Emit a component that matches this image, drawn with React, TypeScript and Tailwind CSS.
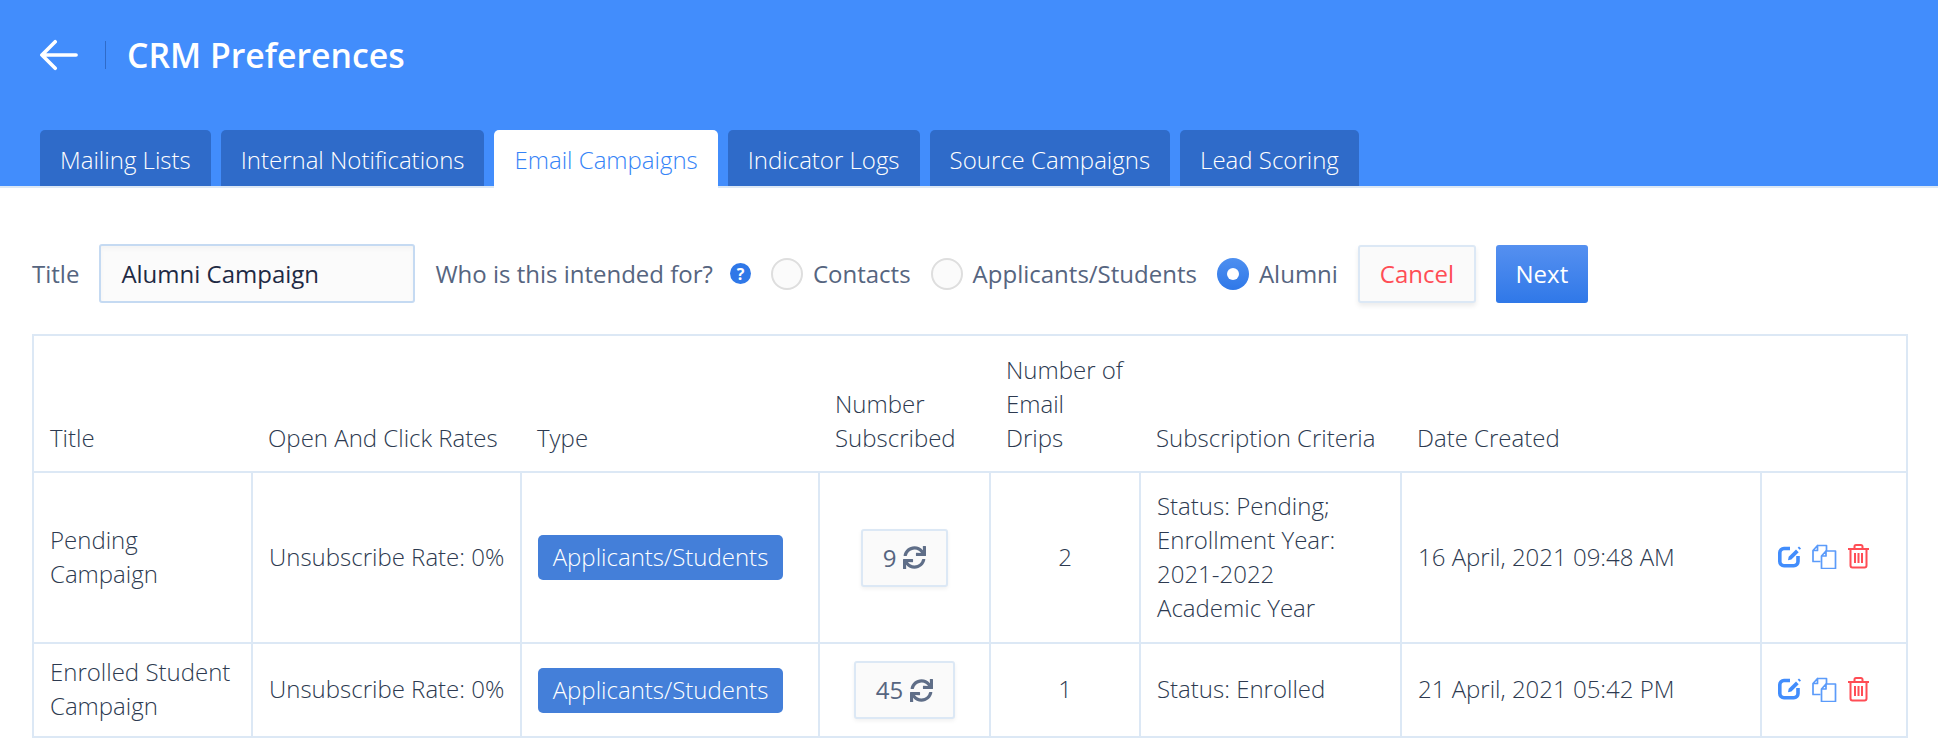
import { FaSync } from "react-icons/fa";

const tabs = ["Mailing Lists", "Internal Notifications", "Email Campaigns", "Indicator Logs", "Source Campaigns", "Lead Scoring"];

function EditIcon() {
    return (
        <svg width="24" height="24" viewBox="0 0 24 24" fill="none">
            <path d="M12 3.500H6A4.200 4.200 0 0 0 1.800 7.700v8.900A4.200 4.200 0 0 0 6 20.800h9.800a4.200 4.200 0 0 0 4.200-4.200V11" stroke="#428dfc" strokeWidth="3.600" />
            <path d="M10 15.200l.7-3.400L18 4.500l2.700 2.700-7.300 7.300z" fill="#428dfc" />
            <path d="M21 1.500l2 2-1.300 1.300-2-2z" fill="#428dfc" />
        </svg>
    );
}

function CopyIcon() {
    return (
        <svg width="25" height="25" viewBox="0 0 25 25" fill="none" stroke="#5b9bfa" strokeWidth="1.700" strokeLinejoin="round">
            <path d="M5.500 1.500h9v6M8.500 17.500H1V6.500l4.500-5v5H1" />
            <path d="M14 7h9.500v17.500h-14V12L14 7v5H9.500" fill="#fff" />
        </svg>
    );
}

function TrashIcon() {
    return (
        <svg width="23" height="25" viewBox="0 0 23 25" fill="none" stroke="#ff4d55" strokeWidth="2">
            <path d="M1 5h21" />
            <path d="M7.500 5V2.500a1.500 1.500 0 0 1 1.500-1.500h5a1.500 1.500 0 0 1 1.500 1.500V5" />
            <path d="M3.500 5v16.500a2 2 0 0 0 2 2h12a2 2 0 0 0 2-2V5" />
            <path d="M8 9v10M11.500 9v10M15 9v10" />
        </svg>
    );
}

function Radio({ checked, label }: { checked?: boolean; label: string }) {
    return (
        <div className="flex items-center gap-[10px]">
            {checked ? (
                <span className="flex h-8 w-8 items-center justify-center rounded-full bg-gradient-to-b from-[#4d8ff0] to-[#2f78e8]">
                    <span className="h-3 w-3 rounded-full bg-white" />
                </span>
            ) : (
                <span className="h-8 w-8 rounded-full border-2 border-[#dedede] bg-[#fbfbfb]" />
            )}
            <span>{label}</span>
        </div>
    );
}

function CountButton({ value }: { value: string }) {
    return (
        <button className="inline-flex h-[58px] items-center gap-[7px] rounded-[3px] border-2 border-[#dce8f5] bg-[#fafafa] px-5 text-[24px] font-normal text-[#566580] shadow-[0_2px_4px_rgba(0,0,0,0.06)]">
            {value}
            <FaSync className="text-[23px] text-[#5f6e88]" />
        </button>
    );
}

function TypeBadge() {
    return (
        <span className="inline-block h-[45px] w-[245px] rounded-[5px] bg-[#447fd9] text-center text-[24px] leading-[43px] font-light text-white">
            Applicants/Students
        </span>
    );
}

function Actions() {
    return (
        <div className="flex items-center gap-[10px] pb-[2px]">
            <EditIcon />
            <CopyIcon />
            <TrashIcon />
        </div>
    );
}

const headCell = "align-bottom px-4 pt-[17px] pb-[16px] text-left font-light";
const bodyCell = "border-2 border-[#dce8f5] px-4 py-3 align-middle font-light";
const textCell = "border-2 border-[#dce8f5] px-4 pt-[11px] pb-[13px] align-middle font-light";

export default function App() {
    return (
        <div className="h-[738px] overflow-hidden bg-white font-['Open_Sans',sans-serif] text-[#2d3a50]">
            <header className="flex h-[188px] flex-col justify-between border-b-2 border-[#dce8f5] bg-[#428dfc]">
                <div className="flex items-center pt-[35px] pl-10">
                    <svg width="38" height="38" viewBox="0 0 40 40" fill="none" stroke="white" strokeWidth="3.800" strokeLinecap="round" strokeLinejoin="round">
                        <path d="M2 20h36M16 6L2 20l14 14" />
                    </svg>
                    <span className="mr-[21px] ml-[27px] h-[28px] w-px bg-[#2f6bc9]" />
                    <h1 className="text-[33.800px] leading-10 font-semibold text-white">CRM Preferences</h1>
                </div>
                <nav className="-mb-[2px] flex gap-[10px] pl-10">
                    {tabs.map((t) =>
                        t === "Email Campaigns" ? (
                            <div key={t} className="flex h-[58px] items-center rounded-t-[5px] bg-white px-5 pt-[4px] pb-[2px] text-[24px] font-light text-[#3583f7]">
                                {t}
                            </div>
                        ) : (
                            <div key={t} className="mb-[2px] flex h-[56px] items-center rounded-t-[5px] bg-[#2f6bc9] px-5 pt-[4px] text-[24px] font-light text-white">
                                {t}
                            </div>
                        )
                    )}
                </nav>
            </header>

            <section className="flex items-center px-8 pt-[56px] text-[24px] text-[#566580]">
                <span>Title</span>
                <input
                    readOnly
                    value="Alumni Campaign"
                    className="mr-[20px] ml-5 h-[59px] w-[316px] rounded-[3px] border-2 border-[#c5daf2] bg-[#fbfbfb] px-5 text-[#1f2a44] shadow-[inset_0_3px_4px_rgba(0,0,0,0.03)]"
                />
                <span>Who is this intended for?</span>
                <span className="mr-[20px] ml-[17px] flex h-[21px] w-[21px] items-center justify-center rounded-full bg-[#2f78e8] text-[16px] leading-none font-bold text-white">?</span>
                <div className="flex items-center gap-5">
                    <Radio label="Contacts" />
                    <Radio label="Applicants/Students" />
                    <Radio checked label="Alumni" />
                </div>
                <button className="ml-5 h-[58px] w-[118px] rounded-[3px] border-2 border-[#dce8f5] bg-[#fafafa] text-[#ff4d55] shadow-[0_3px_5px_rgba(0,0,0,0.08)]">Cancel</button>
                <button className="ml-5 h-[58px] w-[92px] rounded-[3px] bg-gradient-to-b from-[#5590f0] to-[#2f78e8] text-white">Next</button>
            </section>

            <div className="pt-[31px] pl-8">
                <table className="w-[1874px] table-fixed border-collapse border-2 border-[#dce8f5] text-[24px] leading-[34px]">
                    <colgroup>
                        <col className="w-[219px]" />
                        <col className="w-[269px]" />
                        <col className="w-[298px]" />
                        <col className="w-[171px]" />
                        <col className="w-[150px]" />
                        <col className="w-[261px]" />
                        <col className="w-[360px]" />
                        <col className="w-[146px]" />
                    </colgroup>
                    <thead>
                        <tr className="h-[136px] border-b-2 border-[#dce8f5]">
                            <th className={headCell}>Title</th>
                            <th className={headCell}>Open And Click Rates</th>
                            <th className={headCell}>Type</th>
                            <th className={headCell}>Number Subscribed</th>
                            <th className={headCell}>Number of Email Drips</th>
                            <th className={headCell}>Subscription Criteria</th>
                            <th className={headCell}>Date Created</th>
                            <th className={headCell} />
                        </tr>
                    </thead>
                    <tbody>
                        <tr className="h-[171px]">
                            <td className={textCell}>Pending Campaign</td>
                            <td className={`${textCell} whitespace-nowrap`}>Unsubscribe Rate: 0%</td>
                            <td className={bodyCell}><TypeBadge /></td>
                            <td className={`${bodyCell} text-center`}><CountButton value="9" /></td>
                            <td className={`${textCell} text-center`}>2</td>
                            <td className={textCell}>Status: Pending; Enrollment Year: 2021-2022 Academic Year</td>
                            <td className={textCell}>16 April, 2021 09:48 AM</td>
                            <td className={bodyCell}><Actions /></td>
                        </tr>
                        <tr className="h-[92px]">
                            <td className={textCell}>Enrolled Student Campaign</td>
                            <td className={`${textCell} whitespace-nowrap`}>Unsubscribe Rate: 0%</td>
                            <td className={bodyCell}><TypeBadge /></td>
                            <td className={`${bodyCell} text-center`}><CountButton value="45" /></td>
                            <td className={`${textCell} text-center`}>1</td>
                            <td className={textCell}>Status: Enrolled</td>
                            <td className={textCell}>21 April, 2021 05:42 PM</td>
                            <td className={bodyCell}><Actions /></td>
                        </tr>
                        <tr className="h-[92px]">
                            <td className={bodyCell} />
                            <td className={bodyCell} />
                            <td className={bodyCell} />
                            <td className={bodyCell} />
                            <td className={bodyCell} />
                            <td className={bodyCell} />
                            <td className={bodyCell} />
                            <td className={bodyCell} />
                        </tr>
                    </tbody>
                </table>
            </div>
        </div>
    );
}
